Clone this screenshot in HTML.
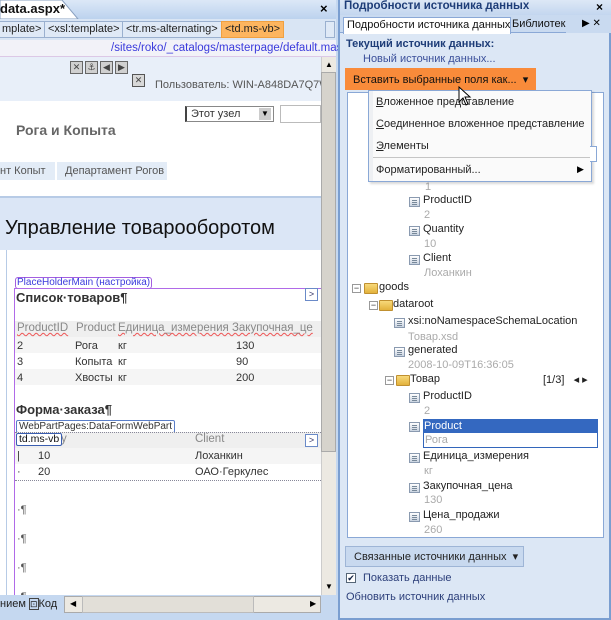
<!DOCTYPE html>
<html><head><meta charset="utf-8">
<style>
*{margin:0;padding:0;box-sizing:border-box}
body{width:611px;height:620px;overflow:hidden;background:#c5d8f0;font-family:"Liberation Sans","DejaVu Sans",sans-serif;font-size:11px;position:relative}
.a{position:absolute;white-space:nowrap}
.bc{position:absolute;top:21px;height:17px;border:1px solid #9ab0cf;background:#dfe9f6;font-size:11px;line-height:15px;padding:0 3px;color:#222}
.g{color:#aaa}
.ic{position:absolute;width:11px;height:10px;border:1px solid #8a9ab0;background:linear-gradient(#fff,#c9d3e0)}
.ic:after{content:"";position:absolute;left:2px;top:2px;width:5px;height:1px;background:#789;box-shadow:0 2px #789,0 4px #789}
.fd{position:absolute;width:14px;height:11px;background:linear-gradient(#f7d97a,#e3b23c);border:1px solid #c09030;border-radius:1px}
.mn{position:absolute;width:9px;height:9px;border:1px solid #999;background:#fff;font-size:9px;line-height:7px;text-align:center;color:#333}
.tb{position:absolute;top:61px;width:13px;height:13px;background:#d0d0d0;border:1px solid #666;font-size:9px;line-height:11px;text-align:center;color:#444}
</style></head><body>
<!-- LEFT PANE -->
<div class="a" style="left:0;top:0;width:336px;height:620px;background:#c5d8f0"></div>
<div class="a" style="left:0;top:0;width:336px;height:19px;background:linear-gradient(#dce8f7,#bcd2ee)"></div>
<svg class="a" style="left:0;top:0" width="80" height="19"><path d="M0 0 H62 L78 19 H0 Z" fill="#fff" stroke="#8aa0c0"/></svg>
<div class="a" style="left:0;top:1px;font-weight:bold;font-size:13px;color:#111">data.aspx*</div>
<div class="a" style="left:320px;top:1px;font-weight:bold;font-size:13px">×</div>
<div class="a" style="left:0;top:19px;width:336px;height:21px;background:#d9e5f4"></div>
<div class="bc" style="left:-2px">mplate&gt;</div>
<div class="bc" style="left:44px">&lt;xsl:template&gt;</div>
<div class="bc" style="left:122px">&lt;tr.ms-alternating&gt;</div>
<div class="bc" style="left:221px;background:#fdb55f;border-color:#f0a040">&lt;td.ms-vb&gt;</div>
<div class="bc" style="left:325px;width:10px;padding:0"></div>
<div class="a" style="left:0;top:40px;width:336px;height:17px;background:#f2f2f8;border-bottom:1px solid #dcc8e6"></div>
<div class="a" style="left:111px;top:42px;color:#3a3adc;font-size:11.5px">/sites/roko/_catalogs/masterpage/default.master</div>
<div class="a" style="left:0;top:57px;width:321px;height:44px;background:#e8eff9"></div>
<div class="tb" style="left:70px">✕</div><div class="tb" style="left:85px">⚓</div><div class="tb" style="left:100px">◀</div><div class="tb" style="left:115px">▶</div>
<div class="a" style="left:132px;top:74px;width:13px;height:13px;background:#d8d8d8;border:1px solid #555;font-size:9px;line-height:11px;text-align:center;color:#444">✕</div>
<div class="a" style="left:155px;top:79px;color:#555;font-size:11px">Пользователь: WIN-A848DA7Q7W</div>
<div class="a" style="left:0;top:101px;width:321px;height:96px;background:#fff"></div>
<div class="a" style="left:185px;top:106px;width:89px;height:16px;border:1px solid #888;border-left:2px solid #444;background:#fff;padding-left:4px;line-height:14px;color:#333">Этот узел</div>
<div class="a" style="left:259px;top:108px;width:12px;height:12px;background:#ccc;font-size:8px;text-align:center;line-height:12px">▼</div>
<div class="a" style="left:280px;top:105px;width:41px;height:18px;border:1px solid #bbb;background:#fff"></div>
<div class="a" style="left:16px;top:122px;font-weight:bold;font-size:14px;color:#666">Рога и Копыта</div>
<div class="a" style="left:0;top:162px;width:55px;height:18px;background:#e3ecf7;color:#555;padding:2px 0;line-height:14px">нт Копыт</div>
<div class="a" style="left:57px;top:162px;width:110px;height:18px;background:#e3ecf7;color:#555;padding:2px 8px;line-height:14px">Департамент Рогов</div>
<div class="a" style="left:0;top:196px;width:321px;height:2px;background:#b7cbe6"></div>
<div class="a" style="left:0;top:198px;width:321px;height:52px;background:#dbe6f6"></div>
<div class="a" style="left:5px;top:217px;font-size:20px;color:#111">Управление товарооборотом</div>
<div class="a" style="left:0;top:250px;width:321px;height:345px;background:#fff"></div>
<div class="a" style="left:6px;top:250px;width:1px;height:345px;background:#b7cbe6"></div>
<div class="a" style="left:15px;top:277px;border:1px solid #a35ee0;border-radius:3px;color:#3a3adc;font-size:10px;padding:0 1px;line-height:10px;background:#fff">PlaceHolderMain (настройка)</div>
<div class="a" style="left:14px;top:288px;width:307px;height:1px;background:#b06ae8"></div>
<div class="a" style="left:14px;top:288px;width:1px;height:310px;background:#b06ae8"></div>
<div class="a" style="left:16px;top:290px;font-weight:bold;font-size:13px;color:#333">Список·товаров¶</div>
<div class="a" style="left:305px;top:288px;width:13px;height:13px;border:1px solid #6a8ac8;color:#336;font-size:9px;text-align:center;line-height:11px">&gt;</div>
<div class="a" style="left:15px;top:321px;width:306px;height:16px;background:#efefef"></div>
<div class="a" style="left:17px;top:322px;color:#888;font-size:11.5px;text-decoration:underline wavy #e55 0.5px">ProductID</div>
<div class="a" style="left:76px;top:322px;color:#888;font-size:11.5px">Product</div>
<div class="a" style="left:118px;top:322px;color:#888;font-size:11.5px;text-decoration:underline wavy #e55 0.5px">Единица_измерения Закупочная_це</div>
<div class="a" style="left:15px;top:337px;width:306px;height:16px;background:#f5f5f5"></div>
<div class="a" style="left:15px;top:369px;width:306px;height:16px;background:#f5f5f5"></div>
<div class="a" style="left:17px;top:338px;color:#333;line-height:16px">2<br>3<br>4</div>
<div class="a" style="left:75px;top:338px;color:#333;line-height:16px">Рога<br>Копыта<br>Хвосты</div>
<div class="a" style="left:118px;top:338px;color:#333;line-height:16px">кг<br>кг<br>кг</div>
<div class="a" style="left:236px;top:338px;color:#333;line-height:16px">130<br>90<br>200</div>
<div class="a" style="left:16px;top:402px;font-weight:bold;font-size:13px;color:#333">Форма·заказа¶</div>
<div class="a" style="left:16px;top:420px;border:1px solid #5a7ec8;border-radius:2px;color:#333;font-size:10px;padding:0 2px;line-height:11px">WebPartPages:DataFormWebPart</div>
<div class="a" style="left:15px;top:432px;width:306px;height:16px;background:#efefef;border-top:1px dotted #889"></div>
<div class="a" style="left:52px;top:433px;color:#888;font-size:11.5px">tity</div>
<div class="a" style="left:195px;top:433px;color:#888;font-size:11.5px">Client</div>
<div class="a" style="left:305px;top:434px;width:13px;height:13px;border:1px solid #6a8ac8;color:#336;font-size:9px;text-align:center;line-height:11px;background:#fff">&gt;</div>
<div class="a" style="left:16px;top:433px;border:1px solid #3a5eb0;border-radius:2px;color:#111;font-size:10.5px;padding:0 2px;line-height:11px;background:#fff">td.ms-vb</div>
<div class="a" style="left:15px;top:448px;width:306px;height:16px;background:#f5f5f5"></div>
<div class="a" style="left:17px;top:448px;color:#333;line-height:16px">|<br>·</div>
<div class="a" style="left:38px;top:448px;color:#333;line-height:16px">10<br>20</div>
<div class="a" style="left:195px;top:448px;color:#333;line-height:16px">Лоханкин<br>ОАО·Геркулес</div>
<div class="a" style="left:15px;top:480px;width:306px;height:1px;border-top:1px dotted #889"></div>
<div class="a" style="left:17px;top:496px;color:#555;line-height:29px">·¶<br>·¶<br>·¶<br>·¶</div>
<!-- scrollbars -->
<div class="a" style="left:321px;top:57px;width:15px;height:538px;background:#ece9e2;border-left:1px solid #ccc"></div>
<div class="a" style="left:321px;top:72px;width:15px;height:380px;background:#d6d3cc;border:1px solid #aaa"></div>
<div class="a" style="left:325px;top:60px;font-size:8px">▲</div>
<div class="a" style="left:325px;top:582px;font-size:8px">▼</div>
<div class="a" style="left:0;top:595px;width:336px;height:25px;background:#c5d8f0"></div>
<div class="a" style="left:0;top:598px;color:#222">нием <span style="font-size:9px;border:1px solid #444">⊡</span>Код</div>
<div class="a" style="left:64px;top:596px;width:257px;height:17px;background:#ece9e2;border:1px solid #aaa"></div>
<div class="a" style="left:82px;top:596px;width:172px;height:17px;background:#e2dfd8;border:1px solid #bbb"></div>
<div class="a" style="left:70px;top:599px;font-size:8px">◀</div>
<div class="a" style="left:310px;top:599px;font-size:8px">▶</div>
<!-- RIGHT PANE -->
<div class="a" style="left:338px;top:0;width:273px;height:620px;background:#dce7f5;border:2px solid #7a9ed0"></div>
<div class="a" style="left:340px;top:0;width:271px;height:15px;background:linear-gradient(#dde8f6,#c3d6ef)"></div>
<div class="a" style="left:344px;top:0;font-weight:bold;color:#1e3d78;font-size:11.5px">Подробности источника данных</div>
<div class="a" style="left:596px;top:0;font-weight:bold;font-size:12px">×</div>
<div class="a" style="left:340px;top:15px;width:271px;height:18px;background:#c9daf0;border-bottom:1px solid #8aa8d6"></div>
<div class="a" style="left:343px;top:17px;width:168px;height:17px;background:#fff;border:1px solid #8aa8d6;border-bottom:none;padding:1px 3px;color:#111">Подробности источника данных</div>
<div class="a" style="left:512px;top:18px;color:#111">Библиотека</div>
<div class="a" style="left:566px;top:16px;width:45px;height:17px;background:#c9daf0;font-size:10px;padding-left:16px;line-height:16px">▶ ✕</div>
<div class="a" style="left:346px;top:38px;font-weight:bold;color:#1e3d78">Текущий источник данных:</div>
<div class="a" style="left:363px;top:53px;color:#3a4f9a">Новый источник данных...</div>
<div class="a" style="left:345px;top:68px;width:191px;height:22px;background:#f98b3a"></div>
<div class="a" style="left:353px;top:73px;color:#111">Вставить выбранные поля как...&nbsp; ▾</div>
<!-- tree -->
<div class="a" style="left:347px;top:92px;width:257px;height:446px;background:#fff;border:1px solid #8aa8d6"></div>
<div class="a" style="left:425px;top:180px;color:#aaa;line-height:14.5px;font-size:11px">1</div>
<div class="ic" style="left:409px;top:197px"></div><div class="a" style="left:423px;top:194px;color:#222">ProductID</div>
<div class="a g" style="left:424px;top:209px">2</div>
<div class="ic" style="left:409px;top:226px"></div><div class="a" style="left:423px;top:223px;color:#222">Quantity</div>
<div class="a g" style="left:424px;top:238px">10</div>
<div class="ic" style="left:409px;top:255px"></div><div class="a" style="left:423px;top:252px;color:#222">Client</div>
<div class="a g" style="left:424px;top:267px">Лоханкин</div>
<div class="mn" style="left:352px;top:284px">−</div><div class="fd" style="left:364px;top:283px"></div><div class="a" style="left:379px;top:281px;color:#222">goods</div>
<div class="mn" style="left:369px;top:301px">−</div><div class="fd" style="left:379px;top:300px"></div><div class="a" style="left:393px;top:298px;color:#222">dataroot</div>
<div class="ic" style="left:394px;top:318px"></div><div class="a" style="left:408px;top:315px;color:#222">xsi:noNamespaceSchemaLocation</div>
<div class="a g" style="left:408px;top:331px">Товар.xsd</div>
<div class="ic" style="left:394px;top:347px"></div><div class="a" style="left:408px;top:344px;color:#222">generated</div>
<div class="a g" style="left:408px;top:359px">2008-10-09T16:36:05</div>
<div class="mn" style="left:385px;top:376px">−</div><div class="fd" style="left:396px;top:375px"></div><div class="a" style="left:410px;top:373px;color:#222">Товар</div>
<div class="a" style="left:543px;top:373px;color:#222">[1/3]&nbsp;&nbsp; ◂ ▸</div>
<div class="ic" style="left:409px;top:393px"></div><div class="a" style="left:423px;top:390px;color:#222">ProductID</div>
<div class="a g" style="left:424px;top:405px">2</div>
<div class="ic" style="left:409px;top:422px"></div>
<div class="a" style="left:423px;top:419px;width:175px;height:29px;border:1px solid #3366bb"></div>
<div class="a" style="left:423px;top:419px;width:175px;height:14px;background:#3468c0;color:#fff;padding-left:1px;line-height:14px">Product</div>
<div class="a g" style="left:425px;top:434px">Рога</div>
<div class="ic" style="left:409px;top:453px"></div><div class="a" style="left:423px;top:450px;color:#222">Единица_измерения</div>
<div class="a g" style="left:424px;top:465px">кг</div>
<div class="ic" style="left:409px;top:483px"></div><div class="a" style="left:423px;top:480px;color:#222">Закупочная_цена</div>
<div class="a g" style="left:424px;top:494px">130</div>
<div class="ic" style="left:409px;top:512px"></div><div class="a" style="left:423px;top:509px;color:#222">Цена_продажи</div>
<div class="a g" style="left:424px;top:524px">260</div>
<!-- menu -->
<div class="a" style="left:368px;top:90px;width:224px;height:92px;background:#fafafa;border:1px solid #8aa8d6;box-shadow:2px 2px 2px rgba(0,0,0,.15)"></div>
<div class="a" style="left:369px;top:91px;width:4px;height:90px;background:#eef0f3"></div>
<div class="a" style="left:376px;top:96px;color:#222"><u>В</u>ложенное представление</div>
<div class="a" style="left:376px;top:118px;color:#222"><u>С</u>оединенное вложенное представление</div>
<div class="a" style="left:376px;top:140px;color:#222"><u>Э</u>лементы</div>
<div class="a" style="left:373px;top:157px;width:218px;height:1px;background:#c5c5c5"></div>
<div class="a" style="left:376px;top:164px;color:#222">Форматированный...</div>
<div class="a" style="left:577px;top:164px;font-size:9px">▶</div>
<div class="a" style="left:590px;top:146px;width:7px;height:16px;border:1px solid #8aa8d6;border-left:none;background:#fff"></div>
<svg class="a" style="left:458px;top:86px" width="14" height="22" viewBox="0 0 14 22"><path d="M1 1 L1 16 L5 12 L8 19 L10 18 L7 11 L12 11 Z" fill="#fff" stroke="#000"/></svg>
<!-- bottom -->
<div class="a" style="left:345px;top:546px;width:179px;height:21px;background:#c8d9ef;border:1px solid #9eb5d6;padding:3px 0 0 8px;color:#222">Связанные источники данных&nbsp; ▾</div>
<div class="a" style="left:346px;top:573px;width:10px;height:10px;border:1px solid #567;background:#fff;font-size:9px;line-height:8px;text-align:center;color:#124">✔</div>
<div class="a" style="left:363px;top:572px;color:#2c3f7a">Показать данные</div>
<div class="a" style="left:346px;top:591px;color:#2c3f7a">Обновить источник данных</div>
</body></html>
